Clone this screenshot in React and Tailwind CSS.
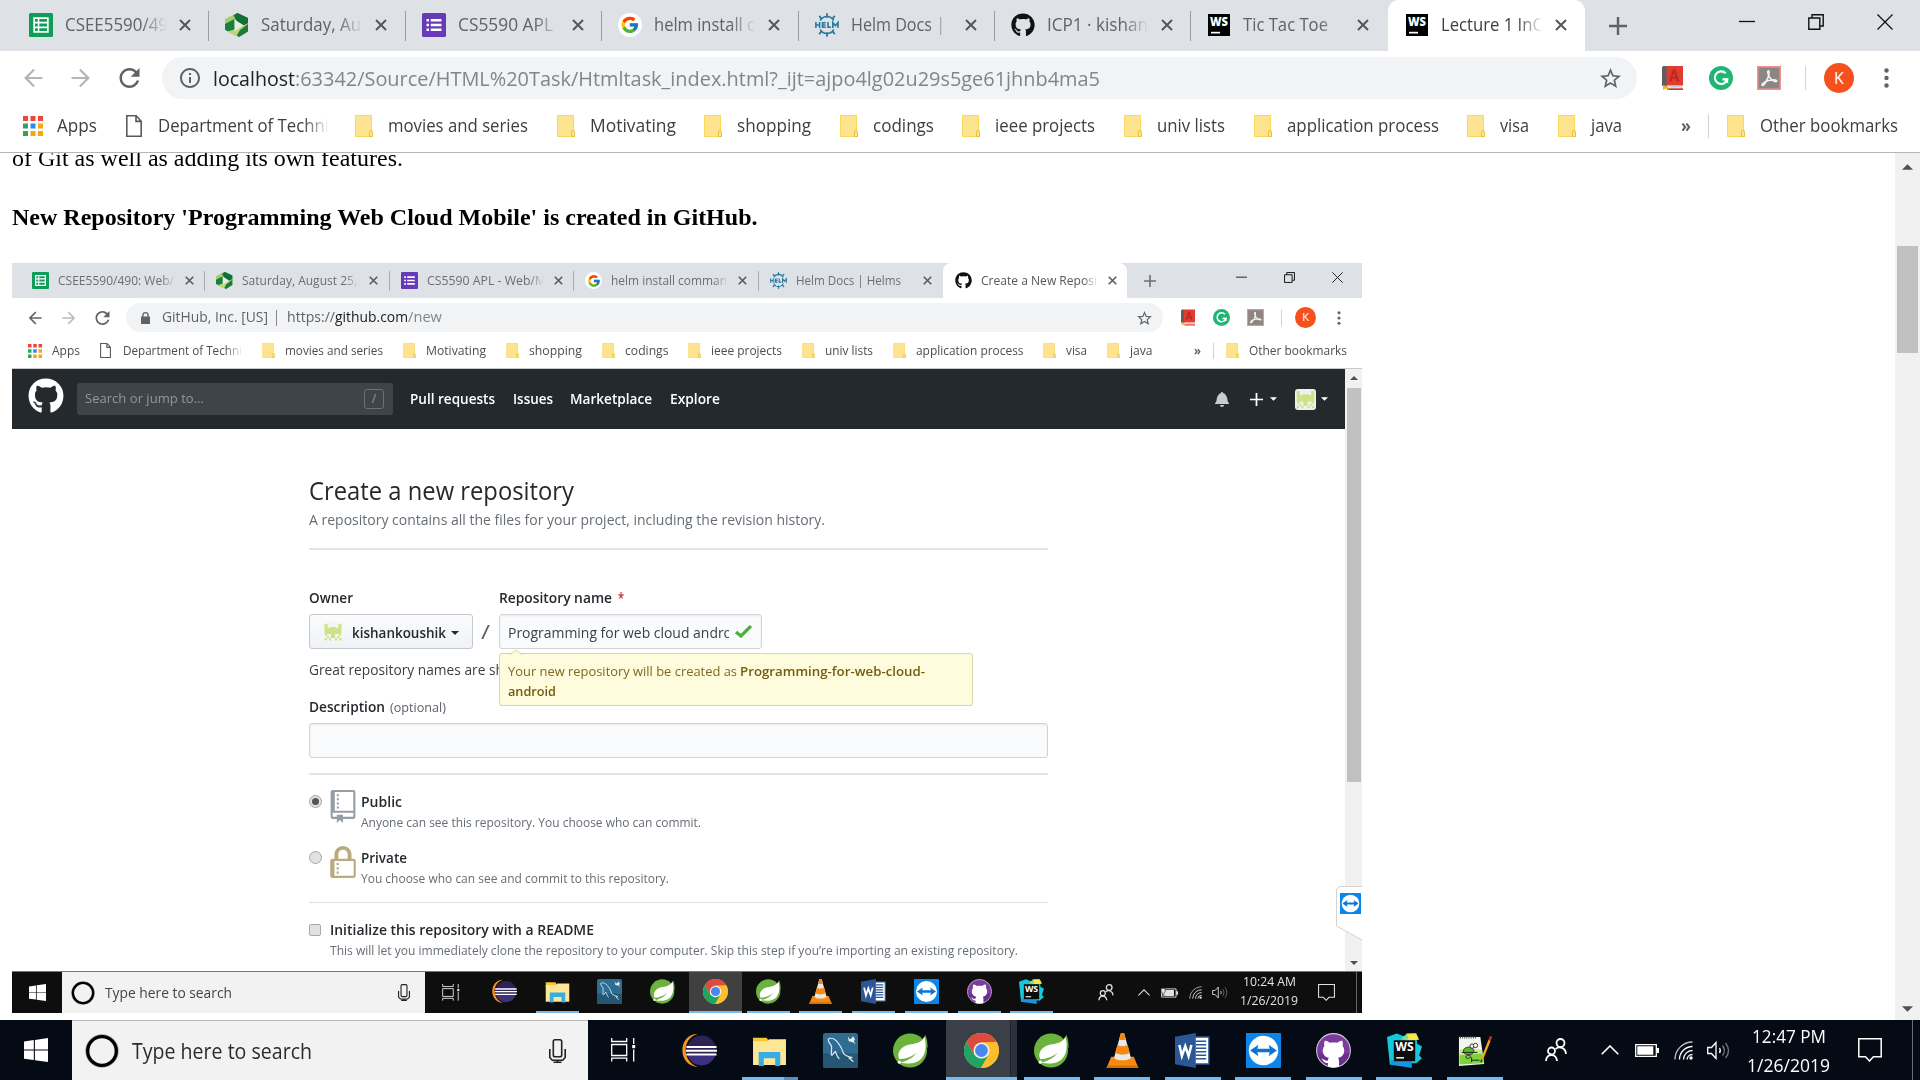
import React, { useLayoutEffect, useRef, useState } from "react";
import { FcGoogle } from "react-icons/fc";
import { FaGithub } from "react-icons/fa";

/* Text condensed or widened to occupy exactly w pixels. */
function T({ w, className = "", children }) {
  const ref = useRef(null);
  const [k, setK] = useState(1);
  useLayoutEffect(() => {
    const natural = parseFloat(getComputedStyle(ref.current).width);
    if (natural) setK(w / natural);
  }, [w, children]);
  return (
    <span className={`block shrink-0 whitespace-pre leading-none ${className}`} style={{ width: w }}>
      <span ref={ref} className="inline-block origin-left align-top" style={{ transform: `scaleX(${k})` }}>
        {children}
      </span>
    </span>
  );
}

function Svg({ box = "0 0 24 24", className, children }) {
  return (
    <svg viewBox={box} className={`block shrink-0 ${className}`} fill="currentColor">
      {children}
    </svg>
  );
}

/* ---------- browser icons ---------- */
const Sheets = ({ className }) => (
  <Svg className={className}>
    <rect width="24" height="24" rx="1.5" fill="#0f9d58" />
    <path fill="#fff" fillRule="evenodd" d="M4.300 4.300h15.400v15.400H4.300zM6 6v2.800h2.800V6zm4.300 0v2.800H18V6zM6 10.500v3h2.800v-3zm4.300 0v3H18v-3zM6 15.200V18h2.800v-2.800zm4.300 0V18H18v-2.800z" />
  </Svg>
);
const Forms = ({ className }) => (
  <Svg className={className}>
    <rect width="24" height="24" rx="1.5" fill="#673ab7" />
    <path fill="#fff" d="M4.5 6H7v2.4H4.5zM8.7 6h10.8v2.4H8.7zM4.5 10.8H7v2.4H4.5zM8.7 10.8h10.8v2.4H8.7zM4.5 15.6H7V18H4.5zM8.7 15.6h10.8V18H8.7z" />
  </Svg>
);
const Panopto = ({ className }) => (
  <Svg className={className}>
    <path fill="#5aa84a" d="M12.500 0L23 5v13l-9 6L0 17V6.500z" />
    <path fill="#a6cf6a" d="M0 6.500L8 2l3.500 6L0 14z" />
    <path fill="#17803f" d="M0 11l9.500-5v12L6 20l-6-3.500z" />
    <path fill="#0f7038" d="M9 2l3.500-2L23 5v6l-6 2-6-6z" />
    <path fill="#bcd77b" d="M2.500 18.500L11 16l7-3 5-3-1 6-8 6-4 1z" />
    <path fill="#1c7a3c" d="M15 17l8-6v7.500L14 24l-2-2z" />
    <path fill="#e4ece4" d="M9.500 6.500l9.500 6-9.500 5.500z" />
  </Svg>
);
const Google = ({ className }) => (
  <span className={`flex shrink-0 items-center justify-center rounded-full bg-white ${className}`}>
    <FcGoogle className="h-[82%] w-[82%]" />
  </span>
);
const Helm = ({ className }) => (
  <Svg className={className}>
    <g stroke="#277a9f" fill="none" strokeWidth="1.5">
      <path d="M5.2 7.6a7.6 7.6 0 0 1 13.6 0M5.2 16.4a7.6 7.6 0 0 0 13.6 0" />
      <path strokeWidth="1.8" strokeLinecap="round" d="M12 4V1M12 20v3M6.4 5.6L4.6 3.4M17.6 5.6l1.8-2.2M6.4 18.4l-1.8 2.2M17.6 18.4l1.8 2.2" />
    </g>
    <path stroke="#277a9f" strokeWidth="1.6" fill="none" d="M.9 9v6M4.6 9v6M.9 12h3.7M10.8 9.8H7.5v4.5h3.3M7.5 12h3M13 9v5.3h3M17.8 15V9.6l2.6 3.2L23 9.6V15" />
  </Svg>
);
const GitMark = ({ className }) => <FaGithub className={`shrink-0 ${className}`} />;
const WebStormTab = ({ className }) => (
  <Svg className={className}>
    <rect x="1" y="1" width="22" height="22" fill="#000" />
    <text x="12" y="13.2" textAnchor="middle" fill="#fff" fontFamily="Open Sans" fontWeight="800" fontSize="11.5" textLength="18" lengthAdjust="spacingAndGlyphs">WS</text>
    <path fill="#fff" d="M4 18.8h9v1.7H4z" />
  </Svg>
);
const Close = ({ className }) => (
  <Svg box="0 0 12 12" className={className}>
    <path stroke="#54585d" strokeWidth="2" d="M1 1l10 10M11 1L1 11" />
  </Svg>
);
const Plus = ({ className }) => (
  <Svg box="0 0 18 18" className={className}>
    <path d="M7.8 0h2.4v7.8H18v2.4h-7.8V18H7.8v-7.8H0V7.8h7.8z" />
  </Svg>
);
const WinMin = ({ className }) => (
  <Svg box="0 0 16 16" className={className}>
    <path stroke="#111" strokeWidth="1.3" d="M0 7.5h16" />
  </Svg>
);
const WinRestore = ({ className }) => (
  <Svg box="0 0 16 16" className={className}>
    <path fill="none" stroke="#111" strokeWidth="1.4" d="M.8 4h11v11.2H.8zM4 4V.8h11.2V12H12" />
  </Svg>
);
const WinClose = ({ className }) => (
  <Svg box="0 0 16 16" className={className}>
    <path stroke="#111" strokeWidth="1.3" d="M.5.5l15 15M15.5.5l-15 15" />
  </Svg>
);
const Back = ({ className }) => (
  <Svg box="3.5 3 17 18" className={className}>
    <path d="M20.5 11H7.8l5.9-5.9L12.3 3.7 4 12l8.3 8.3 1.4-1.4L7.8 13h12.7z" />
  </Svg>
);
const Reload = ({ className }) => (
  <Svg box="4 4 16 16" className={className}>
    <path d="M17.65 6.35C16.2 4.9 14.21 4 12 4c-4.42 0-7.99 3.58-7.99 8s3.57 8 7.99 8c3.73 0 6.84-2.55 7.73-6h-2.08c-.82 2.33-3.04 4-5.65 4-3.31 0-6-2.69-6-6s2.69-6 6-6c1.66 0 3.14.69 4.22 1.78L13 11h7V4l-2.35 2.35z" />
  </Svg>
);
const Info = ({ className }) => (
  <Svg box="2 2 20 20" className={className}>
    <path d="M11 7h2v2h-2zm0 4h2v6h-2zm1-9C6.48 2 2 6.48 2 12s4.48 10 10 10 10-4.48 10-10S17.52 2 12 2zm0 18c-4.41 0-8-3.59-8-8s3.59-8 8-8 8 3.59 8 8-3.59 8-8 8z" />
  </Svg>
);
const Padlock = ({ className }) => (
  <Svg box="0 0 9 12" className={className}>
    <path fillRule="evenodd" d="M0 4.4h1.3V3.2a3.2 3.2 0 0 1 6.4 0v1.2H9V12H0zM2.6 4.4h3.8V3.2a1.9 1.9 0 0 0-3.8 0z" />
  </Svg>
);
const Star = ({ className }) => (
  <Svg box="2 2 20 19" className={className}>
    <path d="M22 9.24l-7.19-.62L12 2 9.19 8.63 2 9.24l5.46 4.73L5.82 21 12 17.27 18.18 21l-1.63-7.03L22 9.24zM12 15.4l-3.76 2.27 1-4.28-3.32-2.88 4.38-.38L12 6.1l1.71 4.04 4.38.38-3.32 2.88 1 4.28L12 15.4z" />
  </Svg>
);
const Book = ({ className }) => (
  <Svg box="0 0 21 24" className={className}>
    <path fill="#5b5f66" d="M0 1.5L1 0h4v20H0z" />
    <path fill="#e23b30" d="M4.5 0H21v19.5H4.5z" />
    <path fill="#b92b22" fillRule="evenodd" d="M7 15.5L11 3.2h2.4l4 12.3h-2.6l-.8-2.7h-3.7l-.8 2.7zM10.9 10.7h2.5l-1.2-4.2z" />
    <path fill="#e8eef2" d="M5 20h16v2.3H5z" />
    <path fill="#8fb6c9" d="M8 20.5h12v.8H8z" />
    <path fill="#d9322a" d="M5 22.3h16V24H5z" />
    <path fill="#f0b429" d="M1 19l5 1.5L7 24l-3-1.4L1 24z" />
  </Svg>
);
const Grammarly = ({ className }) => (
  <Svg className={className}>
    <circle cx="12" cy="12" r="12" fill="#1fb574" />
    <path fill="none" stroke="#fff" strokeWidth="2.1" d="M16.8 7.4a6.3 6.3 0 1 0 1.4 6h-4.8" />
    <path fill="#fff" d="M14.6 12.4h4.6v5l-1.6-1.5z" />
  </Svg>
);
const Pdf = ({ className }) => (
  <Svg className={className}>
    <rect x=".8" y=".8" width="22.4" height="22.4" fill="#8b8583" stroke="#f0918a" strokeWidth="1.6" />
    <path fill="none" stroke="#f4f2f1" strokeWidth="1.5" d="M11.3 4.7c-2 .6.8 7 3.8 9.300 2 1.700 4.700 2.200 4.700 1 0-1.900-7.600-1.200-11.300.6-3.200 1.500-4.300 3.300-3.300 3.800 1.800.8 5.300-5.800 6.500-10.200.6-2.400.4-4.700-.4-4.500z" />
  </Svg>
);
const Dots = ({ className }) => (
  <Svg box="0 0 5 20" className={className}>
    <circle cx="2.5" cy="2.500" r="2.2" /><circle cx="2.5" cy="10" r="2.2" /><circle cx="2.5" cy="17.500" r="2.2" />
  </Svg>
);
const AppsGrid = ({ className }) => (
  <Svg box="0 0 20 20" className={className}>
    <path fill="#f0453a" d="M0 0h5v5H0zM7.500 0h5v5h-5zM15 0h5v5h-5z" />
    <path fill="#34a25a" d="M0 7.500h5v5H0zM0 15h5v5H0z" />
    <path fill="#2a8cf0" d="M7.500 7.500h5v5h-5z" />
    <path fill="#f7a70a" d="M15 7.500h5v5h-5zM7.500 15h5v5h-5zM15 15h5v5h-5z" />
  </Svg>
);
const Doc = ({ className }) => (
  <Svg box="0 0 16 22" className={className}>
    <path fill="#fff" stroke="#5a5a5a" strokeWidth="1.6" d="M.8.8h9.400l5 5.400v15H.8zM10 .8v5.600h5.200" />
  </Svg>
);
const Folder = ({ className }) => (
  <Svg box="0 0 18 22" className={className}>
    <path fill="#ffe48f" stroke="#f8d75a" d="M.5.5h16v15l1 1v5H.5z" />
    <path fill="#ffe48f" stroke="#e8c33c" d="M14.500 21.500v-5c0-1.500 3-1.500 3 0v5z" />
  </Svg>
);

/* ---------- taskbar icons ---------- */
const Windows = ({ className }) => (
  <Svg box="0 0 24 24" className={className}>
    <path d="M0 3.400L9.800 2v9.500H0zM10.900 1.900L24 0v11.500H10.900zM0 12.500h9.800V22L0 20.700zM10.900 12.500H24V24l-13.100-1.800z" />
  </Svg>
);
const Ring = ({ className }) => (
  <Svg box="0 0 34 34" className={className}>
    <circle cx="17" cy="17" r="15" fill="none" stroke="#9a9a9a" strokeWidth="3.400" />
    <circle cx="17" cy="17" r="14.300" fill="none" stroke="#000" strokeWidth="3.300" />
  </Svg>
);
const Mic = ({ className }) => (
  <Svg box="0 0 17 24" className={className}>
    <g fill="none" stroke="#222" strokeWidth="1.600">
      <rect x="4.300" y=".8" width="8.400" height="17" rx="1.800" />
      <path d="M.8 10v8.500l2.500 2.700h10.400l2.500-2.700V10M8.500 21v2M4.500 23.200h8" />
    </g>
  </Svg>
);
const TaskView = ({ className }) => (
  <Svg box="0 0 25 24" className={className}>
    <path fill="none" stroke="currentColor" strokeWidth="1.300" d="M.7 6.500h15v11H.7zM.7 0v3.500h15V0M.7 23.500v-3.300h15v3.300M22.700 0v6M22.700 11.500v12" />
    <path d="M21.200 7h3v3.200h-3z" />
  </Svg>
);
const Eclipse = ({ className }) => (
  <Svg box="0 0 36 34" className={className}>
    <path fill="#f7941e" d="M16 0C-4-.5-6 33 17 34 0 29-1 5 16 0z" />
    <circle cx="20" cy="17" r="15.300" fill="#2c2255" />
    <path fill="#443891" d="M6 22h28c-2 6-7 10.300-14 10.300S8 28 6 22z" opacity=".7" />
    <path fill="#fff" d="M4.500 12.300h31v2h-31zM4 16.200h32v2H4zM4.500 20.100h31v2h-31z" />
  </Svg>
);
const Explorer = ({ className }) => (
  <Svg box="0 0 34 34" className={className}>
    <path fill="#f6c72e" d="M1 4.500h13l2 2.500v4H1z" />
    <path fill="#ffe694" d="M1 8h14l1.500-2H33v25H1z" />
    <path fill="#35aee8" d="M6.500 18.500h21V32h-5v-7.500h-11V32h-5z" />
  </Svg>
);
const MySql = ({ className }) => (
  <Svg box="0 0 34 34" className={className}>
    <rect width="34" height="34" rx="2.500" fill="#2e6c92" />
    <path fill="#255673" d="M0 20h34v11.500a2.500 2.500 0 0 1-2.500 2.500h-29A2.500 2.500 0 0 1 0 31.500z" />
    <path fill="none" stroke="#dce9f0" strokeWidth="1.200" d="M5 6c3-2 7 0 10 4 3 3.500 4 7 5 10 1.500 2 5 3 8.500 4l-3 .5 4 3.500M5 6c0 3 2 4 3 6s0 5 0 9c1 2 2-2 4-3 1 2 2 6 4 7" />
    <path fill="#e8f0f4" d="M24 3l2 3 2-1 1-2 2 3-1 2 1.500 3L29 9l-4-1z" />
  </Svg>
);
const Spring = ({ className }) => (
  <Svg box="0 0 36 36" className={className}>
    <circle cx="17.500" cy="18" r="17.500" fill="#6cb33e" />
    <path fill="#6cb33e" d="M29 8l4.500-6c2 6 2 9 2 14z" />
    <path fill="#fff" d="M32.500 4c2 9 1.500 17-3.500 22.500C24 32 15 32 7.500 30.500 12 29 20 27 24.500 20 19 25 12 26.500 6.500 27 3 20 9 13.500 16 12c7-1.200 13-2 16.500-8z" />
    <circle cx="6.500" cy="30" r="1.700" fill="#fff" />
  </Svg>
);
const Chrome = ({ className }) => (
  <Svg box="0 0 34 34" className={className}>
    <circle cx="17" cy="17" r="17" fill="#fbbf2d" />
    <path fill="#de4b3e" d="M17 0A17 17 0 0 1 31.700 8.500L17 9.300 9.900 21.300 2.300 8.500A17 17 0 0 1 17 0z" />
    <path fill="#1fa463" d="M2.300 8.500A17 17 0 0 0 16.500 34l7.300-12.800L17 25l-7.300-4z" />
    <path fill="#fbbf2d" d="M17 9.300h15A17 17 0 0 1 16.500 34l7.500-12.500z" />
    <circle cx="17" cy="17" r="7.800" fill="#f1f1f1" />
    <circle cx="17" cy="17" r="6.200" fill="#4a87ee" />
  </Svg>
);
const Vlc = ({ className }) => (
  <Svg box="0 0 32 34" className={className}>
    <path fill="#f58a12" d="M5 23h22l4.500 11H.5z" />
    <path fill="#e8e8e8" d="M14.500 0h3L25 27c-3 3-15 3-18 0z" />
    <path fill="#f58a12" d="M14.600 0h2.800l2 6c-1.500 1.200-5.300 1.200-6.800 0zM11 11.500c2 1.700 8 1.700 10 0l2 7.500c-3 2.600-11 2.600-14 0zM7.600 24c3 3.400 13.800 3.400 16.800 0l1 3.500c-3 3.500-15.800 3.500-18.800 0z" />
    <path fill="#d86e08" d="M.5 34l1-2.500h29l1 2.500z" />
  </Svg>
);
const Word = ({ className }) => (
  <Svg box="0 0 32 32" className={className}>
    <path fill="#fff" stroke="#2b5797" strokeWidth="1.300" d="M17 3.700h14v24.600H17z" />
    <path stroke="#2b5797" strokeWidth="1.400" d="M19 7.500h9.500M19 10.700h9.500M19 13.900h9.500M19 17.100h9.500M19 20.300h9.500M19 23.500h9.500" />
    <path fill="#2b5797" d="M0 3.400L19 0v32L0 28.600z" />
    <path fill="none" stroke="#fff" strokeWidth="2.300" d="M4 11l2.300 10L9.400 12l3 9L15 11" />
  </Svg>
);
const TeamViewer = ({ className }) => (
  <Svg box="0 0 34 34" className={className}>
    <rect width="34" height="34" rx="1" fill="#0c84e8" />
    <circle cx="17" cy="17" r="14.300" fill="#fff" />
    <path fill="#0c74d8" d="M4 17l8-5.500-1 3.700h12l-1-3.700 8 5.500-8 5.500 1-3.700H11l1 3.700z" />
  </Svg>
);
const GitDesktop = ({ className }) => (
  <Svg box="0 0 34 34" className={className}>
    <circle cx="17" cy="17" r="16.400" fill="#7b3c9c" stroke="#d9c9e4" strokeWidth="1" />
    <path fill="#5d2480" d="M1.500 20h31A16 16 0 0 1 17 33 16 16 0 0 1 1.500 20z" opacity=".55" />
    <path fill="#fff" d="M8.500 7.500c1.500-.3 4 1 5 2 2-.5 5-.5 7 0 1-1 3.500-2.300 5-2 .8 1.800.7 3.600.3 4.800 3.200 4.200 1.700 11-4.300 11.700 1.200 1.500.8 5 .9 8.500-3.500 1-7.300 1-10.800 0v-3.400c-4 .8-4.500-3-6.500-4 2.500-.4 3.200 2.600 6.500 1.600.1-1 .2-2 .9-2.700-6-.7-7.500-7.500-4.300-11.700-.4-1.200-.5-3 .3-4.800z" />
  </Svg>
);
const WebStorm = ({ className }) => (
  <Svg box="0 0 36 36" className={className}>
    <path fill="#16c8dc" d="M0 4l10-3.500 8 3L26 .5l4 1.500 1 9 5 3-3 9 3 3-6 5H7L3 33z" />
    <path fill="#1795e0" d="M3.500 28l22 1v7L16 34.500 4.500 33z" />
    <path fill="#f3e94e" d="M20 .5L30 .3l3 6.700-14 1z" />
    <path fill="#7fdd9a" d="M16 4l5-3.500 1 6.500h-7z" />
    <rect x="7" y="7.500" width="22" height="21.500" fill="#0c0c0c" />
    <text x="18" y="19" textAnchor="middle" fill="#fff" fontFamily="Open Sans" fontWeight="700" fontSize="12.500" textLength="19" lengthAdjust="spacingAndGlyphs">WS</text>
    <path fill="#fff" d="M9.500 24.800h8v1.500h-8z" />
  </Svg>
);
const NotepadPP = ({ className }) => (
  <Svg box="0 0 36 36" className={className}>
    <path fill="#f4f5ee" d="M2 4h22l4 28L2 34z" />
    <path fill="#c9e98c" d="M2.500 17h23l1 8-24 2z" />
    <path fill="#7cd43a" d="M2.500 23l23.500-2 1.500 10L2.500 32.500z" />
    <ellipse cx="12" cy="18.500" rx="5.500" ry="4" fill="#57b52a" stroke="#223" strokeWidth=".8" />
    <circle cx="15.500" cy="13.500" r="2.200" fill="#fff" stroke="#222" strokeWidth=".9" />
    <circle cx="19" cy="12.800" r="2.200" fill="#fff" stroke="#222" strokeWidth=".9" />
    <path stroke="#222" strokeWidth="1" fill="none" d="M5 20h16M11 23c-3 1-2 4 1 3s2-4-1-3M15 25v5M15 28h8" />
    <path stroke="#444" strokeWidth="2.200" strokeDasharray="1 1.200" d="M3 4.500h17" />
    <path stroke="#f4a71c" strokeWidth="2.400" d="M25.500 27.500l8-20" />
    <path stroke="#c0392b" strokeWidth="2.400" d="M33.500 7.500l1.500-4" />
    <path stroke="#333" strokeWidth="1.500" d="M25.600 27.300l-1 2.800" />
  </Svg>
);
const People = ({ className }) => (
  <Svg box="0 0 22 24" className={className}>
    <g fill="none" stroke="currentColor" strokeWidth="1.800">
      <circle cx="15.500" cy="5" r="4" /><circle cx="6.500" cy="13" r="3.500" />
      <path d="M1 23c.3-8 10.500-8 11 0M10.500 11c4-3.500 10-1 10.500 5" />
    </g>
  </Svg>
);
const Chevron = ({ className }) => (
  <Svg box="0 0 18 10" className={className}>
    <path fill="none" stroke="currentColor" strokeWidth="1.600" d="M.7 9.300L9 1l8.300 8.300" />
  </Svg>
);
const Battery = ({ className, plug }) => (
  <Svg box="0 0 24 13" className={className}>
    <path fill="none" stroke="currentColor" strokeWidth="1.300" d="M.7.7h20.600v11.600H.7z" />
    <path d="M2.300 2.300h16v8.400h-16zM21.500 4H24v5h-2.500z" />
    {plug && <path d="M0 0h6v4L4 7v5H2V7L0 4z" stroke="#111" strokeWidth=".8" />}
  </Svg>
);
const Wifi = ({ className }) => (
  <Svg box="0 0 19 19" className={className}>
    <g fill="none" stroke="currentColor" strokeWidth="1.300">
      <path d="M1 18.500A17.500 17.500 0 0 1 18.500 1" opacity=".75" />
      <path d="M5.500 18.500a13 13 0 0 1 13-13M9.500 18.500a9 9 0 0 1 9-9M13 18.500a5.500 5.500 0 0 1 5.500-5" />
    </g>
    <circle cx="17" cy="17" r="1.700" />
  </Svg>
);
const Speaker = ({ className }) => (
  <Svg box="0 0 23 19" className={className}>
    <g fill="none" stroke="currentColor" strokeWidth="1.300">
      <path d="M.7 6.500h3.800L9 1.500v16l-4.500-5H.7z" />
      <path d="M12.500 7c1 1.500 1 3.500 0 5" />
      <path opacity=".45" d="M15.500 4.500c2.300 3 2.300 7 0 10M18.500 2c4 4.500 4 10.500 0 15" />
    </g>
  </Svg>
);
const Note = ({ className }) => (
  <Svg box="0 0 24 24" className={className}>
    <path fill="none" stroke="currentColor" strokeWidth="1.500" d="M.8.8h22.400v18h-7.800L11.500 23l-4-4.200H.8z" />
  </Svg>
);
const Caret = ({ className }) => (
  <Svg box="0 0 8 4" className={className}>
    <path d="M0 0h8L4 4z" />
  </Svg>
);
const Avatar = ({ className, bg }) => (
  <Svg box="0 0 10 10" className={className}>
    <rect width="10" height="10" fill={bg} />
    <path fill="#cfe285" d="M.8 1h1.500v2h1.200V2.500h3V3h1.200V1h1.500v5H.8zM.8 8h1.200v1.200H.8zM3 8h1v1.200H3zM6 8h1v1.200H6zM8 8h1.200v1.200H8zM2 7h1v1H2zM4 6h2v2H4zM7 7h1v1H7zM1 6h1v1H1zM8 6h1v1H8z" />
  </Svg>
);

/* ---------- tab strip ---------- */
function Tab({ big, icon: Icon, label, w, active, last }) {
  if (big)
    return (
      <div className={`relative flex h-[51px] shrink-0 items-center pb-px ${active ? "w-[197px] rounded-t-[11px] bg-white pl-[17px]" : "w-[196.400px] pl-[16px]"}`}>
        <Icon className="h-6 w-6 text-[#111]" />
        <div className="ml-3 flex h-8 w-[102px] items-center overflow-hidden pb-px mask-r-from-75% mask-r-to-100%">
          <T w={w} className={`text-[17.500px] ${active ? "text-[#3c4043]" : "text-[#5f6368]"}`}>{label}</T>
        </div>
        <Close className="ml-[12px] h-3 w-3" />
        {!active && !last && <div className="absolute right-0 top-[11px] h-[30px] w-px bg-[#9a9da1]" />}
      </div>
    );
  return (
    <div className={`relative flex h-[35px] shrink-0 items-center ${active ? "w-[184px] rounded-t-[8px] bg-white pl-[12px]" : "w-[184.400px] pl-[11px]"}`}>
      <Icon className="h-[17px] w-[17px] text-[#111]" />
      <div className="ml-[9px] flex h-6 w-[117px] items-center overflow-hidden mask-r-from-88% mask-r-to-100%">
        <T w={w} className={`text-[12.700px] ${active ? "text-[#55595d]" : "text-[#6b6f74]"}`}>{label}</T>
      </div>
      <Close className="ml-[10px] h-[9px] w-[9px]" />
      {!active && !last && <div className="absolute right-0 top-2 h-5 w-px bg-[#a9acb0]" />}
    </div>
  );
}

const outerTabs = [
  { icon: Sheets, label: "CSEE5590/49", w: 103 },
  { icon: Panopto, label: "Saturday, Au", w: 100 },
  { icon: Forms, label: "CS5590 APL", w: 95 },
  { icon: Google, label: "helm install c", w: 101 },
  { icon: Helm, label: "Helm Docs |", w: 94 },
  { icon: GitMark, label: "ICP1 · kishan", w: 101 },
  { icon: WebStormTab, label: "Tic Tac Toe", w: 85, last: true },
  { icon: WebStormTab, label: "Lecture 1 InC", w: 102, active: true },
];
const innerTabs = [
  { icon: Sheets, label: "CSEE5590/490: Web/", w: 116 },
  { icon: Panopto, label: "Saturday, August 25,", w: 115 },
  { icon: Forms, label: "CS5590 APL - Web/M", w: 119 },
  { icon: Google, label: "helm install comman", w: 116 },
  { icon: Helm, label: "Helm Docs | Helms", w: 105, last: true },
  { icon: GitMark, label: "Create a New Reposi", w: 116, active: true },
];

const outerMarks = [
  ["movies and series", 140], ["Motivating", 86], ["shopping", 74], ["codings", 61], ["ieee projects", 100],
  ["univ lists", 68], ["application process", 152], ["visa", 29], ["java", 31],
];
const innerMarks = [
  ["movies and series", 98], ["Motivating", 60], ["shopping", 53], ["codings", 43.500], ["ieee projects", 71],
  ["univ lists", 48], ["application process", 107.500], ["visa", 21], ["java", 22.500],
];

function OuterBrowserChrome() {
  return (
    <header className="h-[153px] shrink-0 border-b border-[#b6b6b6] bg-white">
      <div className="flex h-[51px] items-center bg-[#dee1e6] pl-[13px]">
        {outerTabs.map((t) => <Tab key={t.label} big {...t} />)}
        <Plus className="ml-[24px] h-[18px] w-[18px] text-[#5f6368]" />
        <div className="ml-auto flex items-center gap-[53px] pb-2 pr-[27px]">
          <WinMin className="h-4 w-4" />
          <WinRestore className="h-4 w-4" />
          <WinClose className="h-4 w-4" />
        </div>
      </div>
      <div className="flex h-[54px] items-center text-[#5f6368]">
        <Back className="ml-[23px] h-5 w-5 text-[#b4b6b8]" />
        <Back className="ml-7 h-5 w-5 rotate-180 text-[#b4b6b8]" />
        <Reload className="ml-7 h-5 w-[21px]" />
        <div className="ml-[22px] flex h-[42px] w-[1475px] items-center rounded-full bg-[#f1f3f4]">
          <Info className="ml-[18px] h-5 w-5" />
          <T w={82} className="ml-[13px] text-[20.500px] text-[#202124]">localhost</T>
          <T w={805} className="text-[20.500px] text-[#80868b]">:63342/Source/HTML%20Task/Htmltask_index.html?_ijt=ajpo4lg02u29s5ge61jhnb4ma5</T>
          <Star className="ml-auto mr-4 h-5 w-[21px]" />
        </div>
        <Book className="ml-[25px] h-6 w-[21px]" />
        <Grammarly className="ml-[26px] h-6 w-6" />
        <Pdf className="ml-6 h-6 w-6" />
        <div className="ml-6 h-6 w-px bg-[#cfd1d3]" />
        <div className="ml-[18px] flex h-[30px] w-[30px] items-center justify-center rounded-full bg-[#f4511e] text-[16px] text-white">K</div>
        <Dots className="ml-[30px] h-5 w-[5px]" />
      </div>
      <div className="flex h-[42px] items-center text-[17.500px] text-[#3c4043]">
        <AppsGrid className="ml-[23px] h-5 w-5" />
        <T w={40} className="ml-[14px]">Apps</T>
        <Doc className="ml-[29px] h-[22px] w-4" />
        <div className="ml-4 flex h-8 w-[171px] items-center overflow-hidden mask-r-from-85% mask-r-to-100%">
          <T w={171}>Department of Techni</T>
        </div>
        <div className="ml-[26px] flex items-center gap-[28.600px]">
          {outerMarks.map(([name, w]) => (
            <div key={name} className="flex items-center gap-[15px]">
              <Folder className="h-[22px] w-[18px]" />
              <T w={w}>{name}</T>
            </div>
          ))}
        </div>
        <T w={10} className="ml-auto font-bold text-[#5f6368]">»</T>
        <div className="ml-[17px] h-6 w-px bg-[#cfd1d3]" />
        <Folder className="ml-[18px] h-[22px] w-[18px]" />
        <T w={138} className="ml-[15px] mr-[22px]">Other bookmarks</T>
      </div>
    </header>
  );
}

function InnerBrowserChrome() {
  return (
    <div className="h-[106px] border-b border-[#c8c8c8] bg-white">
      <div className="flex h-[35px] items-center bg-[#dee1e6] pl-[9px]">
        {innerTabs.map((t) => <Tab key={t.label} {...t} />)}
        <Plus className="ml-[17px] h-3 w-3 text-[#6b6f73]" />
        <div className="ml-auto flex items-center gap-[37px] pb-[6px] pr-[19px]">
          <WinMin className="h-[11px] w-[11px]" />
          <WinRestore className="h-[11px] w-[11px]" />
          <WinClose className="h-[11px] w-[11px]" />
        </div>
      </div>
      <div className="flex h-[39px] items-center text-[#5f6368]">
        <Back className="ml-[16px] h-[14px] w-[14px]" />
        <Back className="ml-5 h-[14px] w-[14px] rotate-180 text-[#b9bbbd]" />
        <Reload className="ml-[19px] h-[14px] w-[15px]" />
        <div className="ml-[16px] flex h-[29px] w-[1037px] items-center rounded-full bg-[#f1f3f4] text-[14.500px]">
          <Padlock className="ml-[15px] h-3 w-[9px]" />
          <T w={106} className="ml-[12px]">GitHub, Inc. [US]</T>
          <div className="ml-2 h-4 w-px bg-[#84888c]" />
          <T w={48} className="ml-[10px]">https://</T>
          <T w={73} className="text-[#202124]">github.com</T>
          <T w={34} className="text-[#80868b]">/new</T>
          <Star className="ml-auto mr-[11px] h-[14px] w-[15px]" />
        </div>
        <Book className="ml-[18px] h-[17px] w-[14px]" />
        <Grammarly className="ml-[18px] h-[17px] w-[17px]" />
        <Pdf className="ml-[17px] h-[17px] w-[17px]" />
        <div className="ml-[17px] h-4 w-px bg-[#cfd1d3]" />
        <div className="ml-[13px] flex h-[21px] w-[21px] items-center justify-center rounded-full bg-[#f4511e] text-[11px] text-white">K</div>
        <Dots className="ml-[21px] h-[14px] w-[4px]" />
      </div>
      <div className="flex h-[27px] items-center text-[12.700px] text-[#4a4e51]">
        <AppsGrid className="ml-[16px] h-[14px] w-[14px]" />
        <T w={28} className="ml-[10px]">Apps</T>
        <Doc className="ml-5 h-[15px] w-[11px]" />
        <div className="ml-3 flex h-6 w-[120px] items-center overflow-hidden mask-r-from-85% mask-r-to-100%">
          <T w={119}>Department of Techni</T>
        </div>
        <div className="ml-[19px] flex items-center gap-[19.900px]">
          {innerMarks.map(([name, w]) => (
            <div key={name} className="flex items-center gap-[10px]">
              <Folder className="h-[15px] w-[13px]" />
              <T w={w}>{name}</T>
            </div>
          ))}
        </div>
        <T w={7} className="ml-auto font-bold text-[#5f6368]">»</T>
        <div className="ml-3 h-4 w-px bg-[#cfd1d3]" />
        <Folder className="ml-3 h-[15px] w-[13px]" />
        <T w={98} className="ml-[10px] mr-[15px]">Other bookmarks</T>
      </div>
    </div>
  );
}

function GitHubHeader() {
  return (
    <div className="flex h-[60px] items-center bg-[#24292e] font-semibold text-white">
      <GitMark className="mb-[6px] ml-[16px] h-[36px] w-[36px]" />
      <div className="ml-[13px] flex h-8 w-[316px] items-center justify-between rounded-[3px] bg-[#3f4448] pl-2 pr-[9px] font-normal">
        <T w={119} className="text-[13.500px] text-[#94979a]">Search or jump to...</T>
        <div className="flex h-5 w-5 items-center justify-center rounded-[3px] border border-[#6b7074] text-[12px] text-[#94979a]">/</div>
      </div>
      <div className="ml-[17px] flex items-center gap-[17.500px] text-[13.800px]">
        <T w={85}>Pull requests</T>
        <T w={40}>Issues</T>
        <T w={82}>Marketplace</T>
        <T w={50}>Explore</T>
      </div>
      <Svg box="0 0 14 16" className="ml-auto h-4 w-4 text-[#c9cbcc]">
        <path d="M14 12v1H0v-1l.73-.58c.77-.77.81-2.55 1.19-4.42C2.69 3.230 6 2 6 2c0-.55.45-1 1-1s1 .45 1 1c0 0 3.390 1.230 4.160 5 .38 1.880.42 3.660 1.190 4.420l.66.58H14zm-7 4c1.110 0 2-.89 2-2H5c0 1.110.89 2 2 2z" />
      </Svg>
      <Plus className="ml-[20px] h-[13px] w-[13px]" />
      <Caret className="ml-[7px] h-1 w-[7px]" />
      <div className="ml-[18px] h-[21px] w-[21px] overflow-hidden rounded-[3px]"><Avatar bg="#f0f0f0" className="h-[21px] w-[21px]" /></div>
      <Caret className="ml-[5px] mr-[17px] h-1 w-[7px]" />
    </div>
  );
}

function Option({ checked, title, tw, sub, sw, children }) {
  return (
    <div className="flex h-[56px]">
      <div className="mt-[7px] flex h-[13px] w-[13px] items-center justify-center rounded-full border border-[#a5a5a5] bg-[#e2e2e2]">
        {checked && <div className="h-[7px] w-[7px] rounded-full bg-[#555]" />}
      </div>
      <div className="ml-2 mt-[2px] w-[26px]">{children}</div>
      <div className="ml-[5px] mt-[4px]">
        <div className="flex h-[20px] items-center"><T w={tw} className="text-[14px] font-semibold text-[#24292e]">{title}</T></div>
        <div className="flex h-[20px] items-center"><T w={sw} className="text-[12.700px] text-[#666d75]">{sub}</T></div>
      </div>
    </div>
  );
}

function RepoForm() {
  return (
    <div className="ml-[297px] w-[739px] text-[#24292e]">
      <div className="mt-[45px] flex h-8 items-center"><T w={265} className="text-[25px]">Create a new repository</T></div>
      <div className="mt-[4px] flex h-5 items-center"><T w={516} className="text-[14px] text-[#666d75]">A repository contains all the files for your project, including the revision history.</T></div>
      <div className="mt-[18px] h-[2px] bg-[#e1e4e8]" />
      <div className="mt-[38px] flex h-5 items-center text-[14px] font-semibold">
        <T w={44}>Owner</T>
        <T w={113} className="ml-[146px]">Repository name</T>
        <T w={6} className="ml-[6px] text-[#cb2431]">*</T>
      </div>
      <div className="mt-[6px] flex h-[35px] items-center">
        <div className="flex h-[35px] w-[164px] items-center rounded-[3px] border border-[#c5c9cd] bg-linear-to-b from-[#fafbfc] to-[#eff3f6] pl-[13px]">
          <Avatar bg="#f4f6f4" className="h-[20px] w-[20px]" />
          <T w={94} className="ml-[9px] mt-[2px] text-[14px] font-semibold">kishankoushik</T>
          <Caret className="ml-[5px] mt-[2px] h-1 w-2" />
        </div>
        <T w={9} className="ml-2 text-[20px] text-[#586069]">/</T>
        <div className="ml-[9px] flex h-[35px] w-[263px] items-center rounded-[3px] border border-[#d1d5da] bg-[#fafbfc] pl-2 shadow-[inset_0_1px_2px_rgba(27,31,35,0.075)]">
          <div className="flex h-6 w-[221px] items-center overflow-hidden pt-[2px]">
            <T w={224} className="text-[14px] text-[#3a3f44]">Programming for web cloud andro</T>
          </div>
          <Svg box="0 0 17 13" className="ml-[6px] h-[13px] w-[17px]">
            <path fill="none" stroke="#4db03c" strokeWidth="3.200" d="M1 7l5 4L16 1" />
          </Svg>
        </div>
      </div>
      <div className="relative mt-[11px] flex h-5 items-center">
        <T w={195} className="text-[13.700px] text-[#3a3f44]">Great repository names are sh</T>
        <div className="absolute left-[190px] top-[-7px] h-[53px] w-[474px] rounded-[3px] border border-[#dcd5a4] bg-[#fffbdd] pl-2 pt-[7px] text-[13px] text-[#7d6a1e]">
          <Svg box="0 0 12 6" className="absolute left-[10px] top-[-5px] h-[6px] w-3">
            <path fill="#fffbdd" stroke="#dcd5a4" d="M0 6l6-5 6 5" />
          </Svg>
          <div className="flex h-[20px] items-center">
            <T w={229}>Your new repository will be created as</T>
            <T w={185} className="ml-[3px] font-semibold text-[#735c0f]">Programming-for-web-cloud-</T>
          </div>
          <div className="flex h-[20px] items-center"><T w={48} className="font-semibold text-[#735c0f]">android</T></div>
        </div>
      </div>
      <div className="mt-[17px] flex h-5 items-center">
        <T w={76} className="text-[14px] font-semibold">Description</T>
        <T w={56} className="ml-[5px] mt-[2px] text-[12.300px] text-[#586069]">(optional)</T>
      </div>
      <div className="mt-[6px] h-[35px] rounded-[3px] border border-[#d1d5da] bg-[#fafbfc] shadow-[inset_0_1px_2px_rgba(27,31,35,0.075)]" />
      <div className="mt-[15px] h-[2px] bg-[#e1e4e8]" />
      <div className="mt-[13px]">
        <Option checked title="Public" tw={41} sub="Anyone can see this repository. You choose who can commit." sw={340}>
          <Svg box="0 0 12 16" className="h-[33px] w-[26px] text-[#959da5]">
            <path d="M4 9H3V8h1v1zm0-3H3v1h1V6zm0-2H3v1h1V4zm0-2H3v1h1V2zm8-1v12c0 .55-.45 1-1 1H6v2l-1.500-1.500L3 16v-2H1c-.55 0-1-.45-1-1V1c0-.55.45-1 1-1h10c.55 0 1 .45 1 1zm-1 10H1v2h2v-1h3v1h5v-2zm0-10H2v9h9V1z" />
          </Svg>
        </Option>
        <Option title="Private" tw={46} sub="You choose who can see and commit to this repository." sw={308}>
          <Svg box="0 0 12 15.500" className="h-[33px] w-[26px] text-[#b9aa80]">
            <path d="M4 13H3v-1h1v1zm8-6v7c0 .55-.45 1-1 1H1c-.55 0-1-.45-1-1V7c0-.55.45-1 1-1h1V4c0-2.200 1.800-4 4-4s4 1.800 4 4v2h1c.55 0 1 .45 1 1zM3.800 6h4.410V4c0-1.220-.98-2.200-2.200-2.200-1.220 0-2.200.98-2.200 2.200v2H3.800zM11 7H2v7h9V7zM4 8H3v1h1V8zm0 2H3v1h1v-1z" />
          </Svg>
        </Option>
      </div>
      <div className="mt-[2px] h-px bg-[#d9dfe2]" />
      <div className="flex pt-[17px]">
        <div className="mt-[4px] h-3 w-3 rounded-[2px] border border-[#a9a9a9] bg-[#e2e2e2]" />
        <div className="ml-[9px]">
          <div className="flex h-5 items-center"><T w={264} className="text-[14px] font-semibold">Initialize this repository with a README</T></div>
          <div className="flex h-[20px] items-center"><T w={688} className="text-[12.700px] text-[#666d75]">This will let you immediately clone the repository to your computer. Skip this step if you’re importing an existing repository.</T></div>
        </div>
      </div>
    </div>
  );
}

/* ---------- taskbars ---------- */
const apps = [
  [Eclipse, ""], [Explorer, "u"], [MySql, ""], [Spring, ""], [Chrome, "active"], [Spring, "u"],
  [Vlc, "u"], [Word, "u"], [TeamViewer, "u"], [GitDesktop, "u"], [WebStorm, "u"],
];

function InnerTaskbar() {
  return (
    <div className="flex h-[42px] items-center border-t border-[#777] bg-[#0e0e0e] text-[#e2e2e2]">
      <div className="flex h-full w-[50px] items-center pl-[17px] text-white"><Windows className="h-[17px] w-[17px]" /></div>
      <div className="flex h-full w-[363px] items-center bg-[#f2f2f2]">
        <Ring className="ml-[9px] h-6 w-6" />
        <T w={127} className="ml-[10px] text-[15px] text-[#444]">Type here to search</T>
        <Mic className="ml-auto mr-[15px] h-[17px] w-[12px]" />
      </div>
      <TaskView className="ml-[17px] h-[17px] w-[18px]" />
      <div className="ml-[18px] flex h-full">
        {apps.map(([Icon, state], i) => (
          <div key={i} className={`flex h-full w-[52.750px] flex-col items-center ${state === "active" ? "bg-[#404040]" : ""}`}>
            <div className="flex h-[39px] items-center"><Icon className="h-[25px] w-[25px]" /></div>
            {state === "u" && <div className="h-[2px] w-[43px] bg-[#76b9ed]" />}
            {state === "active" && <div className="h-[2px] w-full bg-[#76b9ed]" />}
          </div>
        ))}
      </div>
      <People className="ml-auto h-[17px] w-[16px]" />
      <Chevron className="ml-[24px] h-[7px] w-3" />
      <Battery plug className="ml-[11px] h-[10px] w-[17px]" />
      <Wifi className="ml-[11px] h-[13px] w-[13px]" />
      <Speaker className="ml-[10px] h-[13px] w-[16px]" />
      <div className="ml-[12px] flex h-full w-[58px] flex-col items-center gap-[6px] pt-[4px] text-[12.500px]">
        <T w={53}>10:24 AM</T>
        <T w={58}>1/26/2019</T>
      </div>
      <Note className="ml-[20px] h-[17px] w-[17px]" />
      <div className="ml-[21px] mr-[5px] h-full w-px bg-[#666]" />
    </div>
  );
}

function OuterTaskbar() {
  return (
    <footer className="flex h-[60px] shrink-0 items-center bg-[#050b14] text-white">
      <div className="flex h-full w-[72px] items-center pl-6"><Windows className="h-6 w-6" /></div>
      <div className="flex h-full w-[516px] items-center border-t border-[#b9b9b9] bg-[#f2f2f2]">
        <Ring className="ml-[13px] h-[34px] w-[34px]" />
        <T w={180} className="ml-[13px] mt-[2px] text-[21px] text-[#2b2b2b]">Type here to search</T>
        <Mic className="ml-auto mr-[22px] h-6 w-[17px]" />
      </div>
      <TaskView className="ml-[23px] h-6 w-[25px]" />
      <div className="ml-[28px] flex h-full">
        {[...apps, [NotepadPP, "u"]].map(([Icon, state], i) => (
          <div key={i} className={`relative flex h-full w-[70.500px] flex-col items-center ${state === "active" ? "bg-[#3b4048]" : ""}`}>
            {state === "active" && <div className="absolute right-0 top-0 h-full w-[7px] border-l border-[#1d232b] bg-[#2c323b]" />}
            <div className="flex h-[57px] items-center pt-[3px]"><Icon className="h-[35px] w-[35px]" /></div>
            {state === "u" && <div className="h-[3px] w-[56px] bg-[#76b9ed]" />}
            {state === "active" && <div className="relative h-[3px] w-full bg-[#76b9ed]" />}
            {i === 1 && <div className="absolute bottom-0 right-[7px] h-[3px] w-[14px] bg-[#5a8fbb]" />}
          </div>
        ))}
      </div>
      <People className="ml-auto h-6 w-[22px]" />
      <Chevron className="ml-[34px] h-[10px] w-[18px]" />
      <Battery className="ml-[16px] h-[13px] w-6" />
      <Wifi className="ml-[15px] h-[19px] w-[19px]" />
      <Speaker className="ml-[14px] h-[19px] w-[23px]" />
      <div className="ml-[17px] flex h-full w-[83px] flex-col items-center gap-[11px] pt-[8px] text-[17.500px]">
        <T w={74}>12:47 PM</T>
        <T w={83}>1/26/2019</T>
      </div>
      <Note className="ml-[28px] h-6 w-6" />
      <div className="ml-[30px] mr-[7px] h-full w-px bg-[#6a6e74]" />
    </footer>
  );
}

function InnerScrollbar() {
  return (
    <div className="relative flex w-[17px] flex-col items-center bg-[#f1f1f1] text-[#505050]">
      <Caret className="mt-[7px] h-[4px] w-[8px] rotate-180" />
      <div className="mt-2 h-[394px] w-[14px] bg-[#c1c1c1]" />
      <Caret className="mb-[6px] mt-auto h-[4px] w-[8px]" />
      <div className="absolute right-0 top-[517px] h-[55px] w-[26px]">
        <Svg box="0 0 26 55" className="absolute inset-0 h-[55px] w-[26px]">
          <path fill="#fff" stroke="#d2d2d2" d="M28 .5H4L.5 3v37L28 55" />
        </Svg>
        <TeamViewer className="absolute left-[4px] top-[7px] h-[21px] w-[21px]" />
      </div>
    </div>
  );
}

export default function App() {
  return (
    <div className="flex h-[1080px] w-[1920px] flex-col overflow-hidden bg-white font-['Open_Sans','Noto_Sans',sans-serif]">
      <OuterBrowserChrome />
      <div className="flex h-[867px]">
        <main className="w-[1895px] overflow-hidden pl-3 text-black">
          <div className="h-[22px] overflow-hidden font-['Liberation_Serif',serif] text-[24px]">
            <div className="-mt-[9px] flex h-[28px] items-center"><T w={391}>of Git as well as adding its own features.</T></div>
          </div>
          <div className="mt-[28px] flex h-[28px] items-center font-['Liberation_Serif',serif] text-[24px] font-bold">
            <T w={745.5}>New Repository 'Programming Web Cloud Mobile' is created in GitHub.</T>
          </div>
          <div className="mt-[32px] h-[750px] w-[1350px] overflow-hidden">
            <InnerBrowserChrome />
            <div className="flex h-[602px]">
              <div className="w-[1333px]">
                <GitHubHeader />
                <RepoForm />
              </div>
              <InnerScrollbar />
            </div>
            <InnerTaskbar />
          </div>
        </main>
        <div className="flex w-[25px] flex-col items-center bg-[#f1f1f1] text-[#505050]">
          <Caret className="mt-[11px] h-[6px] w-[11px] rotate-180" />
          <div className="mt-[76px] h-[107px] w-[21px] bg-[#c1c1c1]" />
          <Caret className="mb-[8px] mt-auto h-[6px] w-[11px]" />
        </div>
      </div>
      <OuterTaskbar />
    </div>
  );
}
